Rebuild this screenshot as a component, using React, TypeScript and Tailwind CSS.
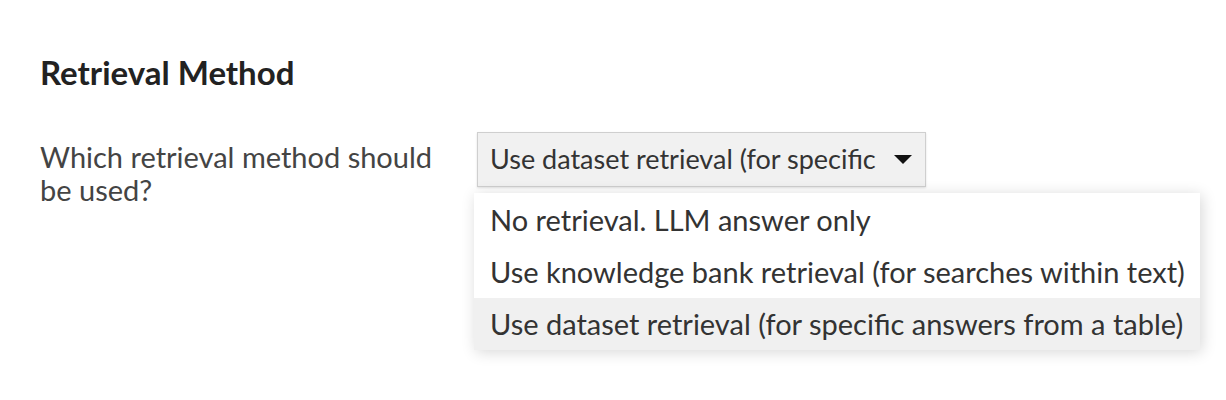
import { useState } from "react";

const options = [
  "No retrieval. LLM answer only",
  "Use knowledge bank retrieval (for searches within text)",
  "Use dataset retrieval (for specific answers from a table)",
];

export default function App() {
  const [selected] = useState(2);

  return (
    <div className="w-[1226px] h-[400px] bg-white pl-10 pt-[52px] font-['Lato',sans-serif]">
      <h2 className="text-[33px] font-bold text-[#222] leading-[40px]">Retrieval Method</h2>
      <div className="mt-10 flex">
        <div className="w-[437px] pt-[8px] text-[29px] leading-[33px] text-[#444]">
          Which retrieval method should
          <br />
          be used?
        </div>
        <div className="relative">
          <button className="flex h-[55px] w-[449px] items-center border border-[#cfcfcf] bg-[#f1f1f1] pl-3 pr-3 text-left text-[27px] text-[#333] shadow-[0_1px_2px_rgba(0,0,0,0.12)]">
            <span className="w-[390px] shrink-0 overflow-hidden whitespace-nowrap">
              {options[selected]}
            </span>
            <svg width="18" height="9" viewBox="0 0 18 9" className="ml-[14px] shrink-0">
              <path d="M0 0 L18 0 L9 9 Z" fill="#111" />
            </svg>
          </button>
          <ul className="absolute left-[-3px] top-[61px] w-[726px] bg-white pt-[1px] shadow-[2px_2px_14px_rgba(0,0,0,0.16)]">
            {options.map((o, i) => (
              <li
                key={o}
                className={`h-[52px] pl-4 text-[29px] leading-[52px] text-[#333] whitespace-nowrap ${
                  i === selected ? "bg-[#f0f0f0]" : ""
                }`}
              >
                {o}
              </li>
            ))}
          </ul>
        </div>
      </div>
    </div>
  );
}
